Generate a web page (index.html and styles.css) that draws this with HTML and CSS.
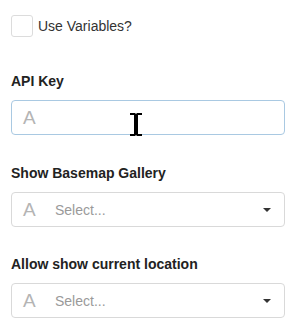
FILE: index.html
```html
<!DOCTYPE html>
<html>
<head>
<meta charset="utf-8">
<link rel="stylesheet" href="styles.css">
</head>
<body>
<div class="panel">
  <label class="check-row">
    <span class="checkbox"></span>
    <span class="check-text">Use Variables?</span>
  </label>

  <div class="field field-first">
    <div class="label">API Key</div>
    <div class="control input focus">
      <span class="glyph">A</span>
      <svg class="ibeam" width="14" height="25" viewBox="0 0 14 25">
        <path d="M1 1h5l1 1 1-1h5v2H9v19h4v2H8l-1-1-1 1H1v-2h4V3H1z" fill="#000"/>
      </svg>
    </div>
  </div>

  <div class="field">
    <div class="label">Show Basemap Gallery</div>
    <div class="control select">
      <span class="glyph">A</span>
      <span class="placeholder">Select...</span>
      <span class="caret"></span>
    </div>
  </div>

  <div class="field field-last">
    <div class="label">Allow show current location</div>
    <div class="control select">
      <span class="glyph">A</span>
      <span class="placeholder">Select...</span>
      <span class="caret"></span>
    </div>
  </div>
</div>
</body>
</html>
```

FILE: styles.css
```css
html, body {
  margin: 0;
  padding: 0;
  background: #fff;
}
body {
  font-family: "Liberation Sans", Arial, sans-serif;
  font-size: 14px;
  color: #333;
}
.panel {
  width: 274px;
  padding: 15px 0 0 11px;
  display: flex;
  flex-direction: column;
}
.check-row {
  display: flex;
  align-items: center;
  gap: 5px;
  height: 22px;
}
.checkbox {
  width: 20px;
  height: 20px;
  border: 1px solid #dcdcdc;
  border-radius: 3px;
  background: #fff;
}
.check-text {
  font-size: 14px;
  color: #333;
}
.field {
  display: flex;
  flex-direction: column;
  gap: 9px;
  margin-top: 28px;
}
.field-first {
  margin-top: 34px;
}
.field-last {
  margin-top: 27px;
}
.label {
  font-weight: bold;
  font-size: 14px;
  line-height: 20px;
  color: #222;
}
.control {
  position: relative;
  height: 33px;
  border: 1px solid #d9d9d9;
  border-radius: 4px;
  display: flex;
  align-items: center;
  padding: 0 12px 0 11px;
}
.control.focus {
  border-color: #a9c9e2;
}
.glyph {
  font-size: 19px;
  color: #b4b4b4;
  width: 11px;
  line-height: 20px;
}
.placeholder {
  margin-left: 21px;
  color: #9a9a9a;
  font-size: 14px;
  flex: 1;
}
.caret {
  width: 0;
  height: 0;
  border-left: 4px solid transparent;
  border-right: 4px solid transparent;
  border-top: 4px solid #333;
  margin-right: 1px;
}
.ibeam {
  position: absolute;
  left: 117px;
  top: 11px;
}
```
